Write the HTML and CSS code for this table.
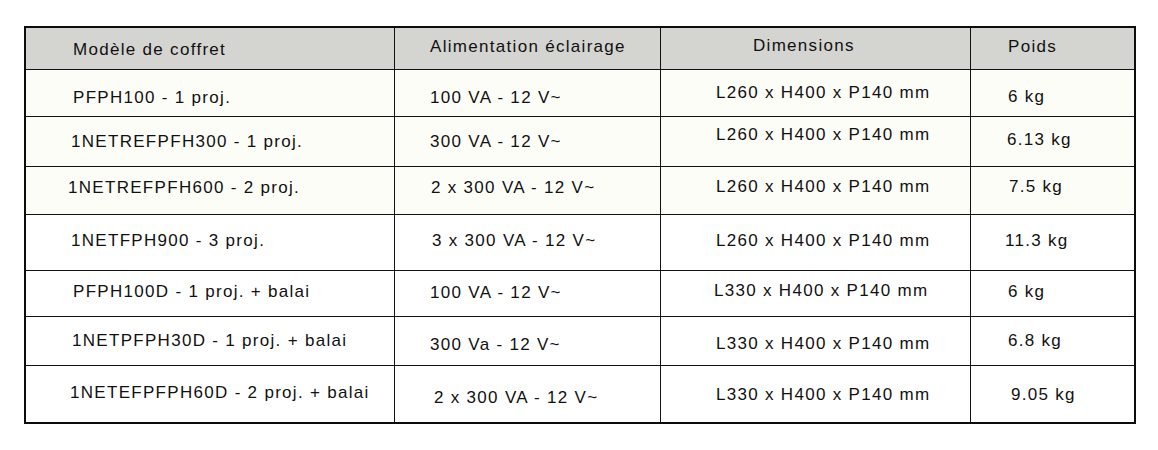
FILE: index.html
```html
<!DOCTYPE html>
<html lang="fr">
<head>
<meta charset="utf-8">
<title>Coffrets</title>
<link rel="stylesheet" href="styles.css">
</head>
<body>
<div class="page">
  <div class="table" role="table">
    <div class="cell head c1 t12" role="columnheader">Modèle de coffret</div>
    <div class="cell head c2 t9" role="columnheader">Alimentation éclairage</div>
    <div class="cell head c3h t8" role="columnheader">Dimensions</div>
    <div class="cell head c4 t9" role="columnheader">Poids</div>

    <div class="cell cream c1 t18">PFPH100 - 1 proj.</div>
    <div class="cell cream c2 t18">100 VA - 12 V~</div>
    <div class="cell cream c3 t13">L260 x H400 x P140 mm</div>
    <div class="cell cream c4 last t17">6 kg</div>

    <div class="cell cream c1 l45 t15">1NETREFPFH300 - 1 proj.</div>
    <div class="cell cream c2 t15">300 VA - 12 V~</div>
    <div class="cell cream c3 t8">L260 x H400 x P140 mm</div>
    <div class="cell cream c4 last l36 t13">6.13 kg</div>

    <div class="cell cream c1 l42 t11">1NETREFPFH600 - 2 proj.</div>
    <div class="cell cream c2 l36 t11">2 x 300 VA - 12 V~</div>
    <div class="cell cream c3 t10">L260 x H400 x P140 mm</div>
    <div class="cell cream c4 last l38 t10">7.5 kg</div>

    <div class="cell c1 l45 t16">1NETFPH900 - 3 proj.</div>
    <div class="cell c2 l37 t16">3 x 300 VA - 12 V~</div>
    <div class="cell c3 t16">L260 x H400 x P140 mm</div>
    <div class="cell c4 last l34 t16">11.3 kg</div>

    <div class="cell c1 t11">PFPH100D - 1 proj. + balai</div>
    <div class="cell c2 t12">100 VA - 12 V~</div>
    <div class="cell c3 l53 t10">L330 x H400 x P140 mm</div>
    <div class="cell c4 last t11">6 kg</div>

    <div class="cell c1 l46 t14">1NETPFPH30D - 1 proj. + balai</div>
    <div class="cell c2 t18">300 Va - 12 V~</div>
    <div class="cell c3 t17">L330 x H400 x P140 mm</div>
    <div class="cell c4 last t14">6.8 kg</div>

    <div class="cell bottom c1 l44 t17">1NETEFPFPH60D - 2 proj. + balai</div>
    <div class="cell bottom c2 l39 t22">2 x 300 VA - 12 V~</div>
    <div class="cell bottom c3 t19">L330 x H400 x P140 mm</div>
    <div class="cell bottom c4 last l40 t19">9.05 kg</div>
  </div>
</div>
</body>
</html>
```

FILE: styles.css
```css
html, body {
  margin: 0;
  padding: 0;
  background: #ffffff;
}

.page {
  padding: 26px 0 0 24px;
}

.table {
  display: grid;
  width: 1108px;
  grid-template-columns: 369px 266px 310px 163px;
  grid-template-rows: 42px 47px 50px 48px 56px 46px 49px 56px;
  border: 2px solid #0c0c0c;
  font-family: "Liberation Sans", Arial, Helvetica, sans-serif;
  font-size: 17px;
  line-height: 20px;
  letter-spacing: 1.3px;
  color: #111111;
  background: #ffffff;
}

.cell {
  box-sizing: border-box;
  border-right: 1px solid #111111;
  border-bottom: 1px solid #111111;
  white-space: nowrap;
}

.cell.last,
.cell.c4 {
  border-right: none;
}

.cell.bottom {
  border-bottom: none;
}

.head {
  background: #d4d4d1;
}

.cream {
  background: #fdfdf8;
}

.c1 { padding-left: 47px; }
.c2 { padding-left: 35px; }
.c3 { padding-left: 55px; }
.c3h { padding-left: 92px; }
.c4 { padding-left: 37px; }

.l34 { padding-left: 34px; }
.l36 { padding-left: 36px; }
.l37 { padding-left: 37px; }
.l38 { padding-left: 38px; }
.l39 { padding-left: 39px; }
.l40 { padding-left: 40px; }
.l42 { padding-left: 42px; }
.l44 { padding-left: 44px; }
.l45 { padding-left: 45px; }
.l46 { padding-left: 46px; }
.l53 { padding-left: 53px; }

.t8 { padding-top: 8px; }
.t9 { padding-top: 9px; }
.t10 { padding-top: 10px; }
.t11 { padding-top: 11px; }
.t12 { padding-top: 12px; }
.t13 { padding-top: 13px; }
.t14 { padding-top: 14px; }
.t15 { padding-top: 15px; }
.t16 { padding-top: 16px; }
.t17 { padding-top: 17px; }
.t18 { padding-top: 18px; }
.t19 { padding-top: 19px; }
.t22 { padding-top: 22px; }
```
